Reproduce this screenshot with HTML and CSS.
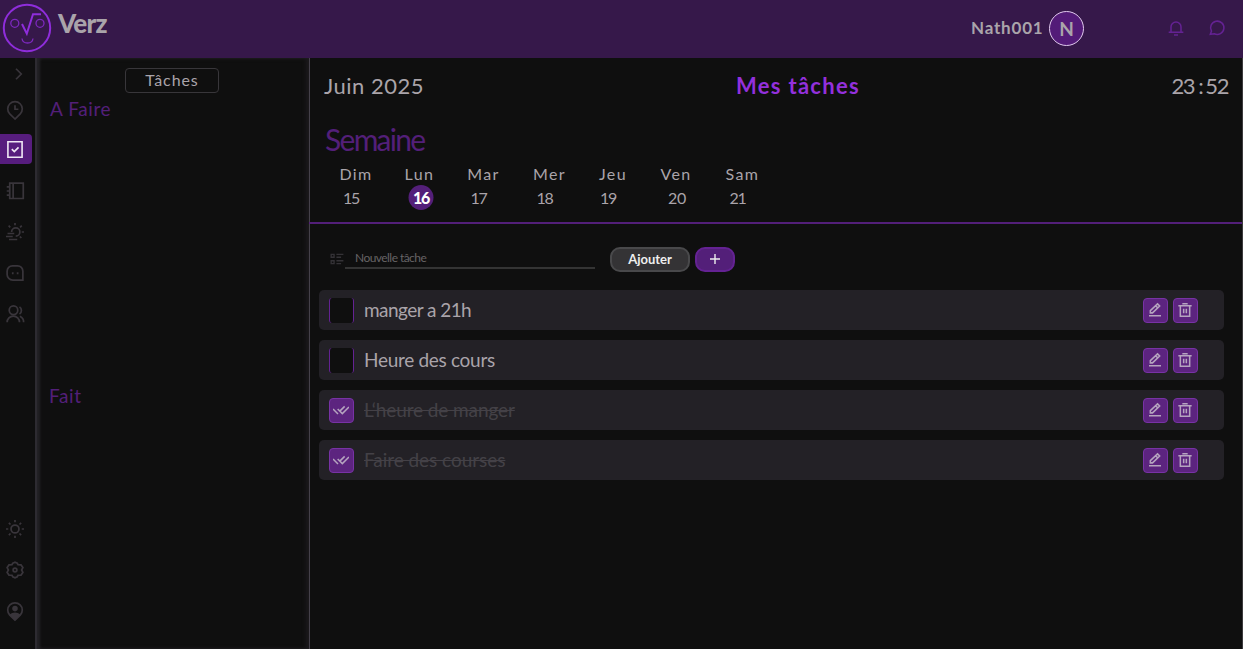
FILE: index.html
```html
<!DOCTYPE html>
<html lang="fr">
<head>
<meta charset="utf-8">
<title>Verz</title>
<link rel="stylesheet" href="styles.css">
</head>
<body>
<svg class="defs" aria-hidden="true">
  <symbol id="edit" viewBox="0 0 24 24"><path d="M3 20.5H21M5 16.3V13L15.8 2.8L19 6L8.3 16.3ZM13 5.7L16.3 9"/></symbol>
  <symbol id="trash" viewBox="0 0 24 24"><path d="M2 5.5H22M5 5.5V21.5H19V5.5M8 2.5H16M10 10V17M14 10V17"/></symbol>
  <symbol id="checks" viewBox="0 0 24 24"><path d="M0 10.5L7.5 18M7 10.5L14 17.5L24 7.5M11 13L17.5 6.5"/></symbol>
</svg>
<header class="topbar">
  <svg class="logo" viewBox="0 0 50 50"><circle cx="25" cy="25" r="23.2" stroke-width="2"/><g stroke-width="1.3" opacity=".8"><circle cx="12.8" cy="20.3" r="4"/><circle cx="38" cy="20.3" r="4"/><path d="M20 35.5Q20.5 40 25.5 40T31 35.5"/></g><path stroke-width="2" d="M20 21L24.8 30.7L31 11.3H39"/></svg>
  <div class="brand">Verz</div>
  <div class="user">Nath001</div>
  <div class="avatar">N</div>
  <div class="alerts">
    <svg class="icon" viewBox="0 0 24 24"><path d="M4.5 18V10.5A7.5 7.5 0 0 1 19.5 10.5V18M1 18.5H23M9 22.5H15"/></svg>
    <svg class="icon" viewBox="0 0 24 24"><path d="M2 21.5L3.7 16.7A10 10 0 1 1 8 20.7Z"/></svg>
  </div>
</header>
<div class="layout">
  <nav class="rail">
    <svg class="icon chevron" viewBox="0 0 24 24"><path d="M8 5L15 12L8 19"/></svg>
    <svg class="icon" viewBox="0 0 24 24"><path d="M12 24L5 17.3A9.7 9.7 0 1 1 19 17.3ZM12 5.5V11H16.5"/></svg>
    <div class="active"><svg class="icon" viewBox="0 0 24 24"><path d="M2 1H22V23H2ZM7.5 11.5L11 15L17 9"/></svg></div>
    <svg class="icon" viewBox="0 0 24 24"><path d="M5 1.5H23V22H5ZM9.5 1.5V22M1 6.5H5M1 12H5M1 17.5H5"/></svg>
    <svg class="icon" viewBox="0 0 24 24"><path d="M7.5 12A5.5 5.5 0 1 1 13 17.5M2 14H11M0 18H9M4 22H15M12 0V3M3.5 3.5L5.7 5.7M21 3.5L18.8 5.7M21 12H24M18.5 18L20.5 20"/></svg>
    <svg class="icon" viewBox="0 0 24 24"><path d="M22.5 21.5H9A7.5 7.5 0 0 1 1.5 14V9.5A7 7 0 0 1 8.5 2.5H15.5A7 7 0 0 1 22.5 9.5ZM9 11V13.5M15.5 11V13.5"/></svg>
    <svg class="icon" viewBox="0 0 24 24"><circle cx="10" cy="7" r="5.7"/><path d="M1.5 23A8.2 8.2 0 0 1 18 23M18 2.5A5.7 5.7 0 0 1 18 12M18.5 15A8.5 8.5 0 0 1 23.5 23"/></svg>
    <svg class="icon rail-bottom" viewBox="0 0 24 24"><circle cx="12" cy="12" r="5.3"/><path d="M12 0V3M12 21V24M0 12H3M21 12H24M3.8 3.8L6 6M18 18L20.2 20.2M18 6L20.2 3.8M3.8 20.2L6 18"/></svg>
    <svg class="icon" viewBox="0 0 24 24"><path d="M9 3L12 1.5L15 3L16 5L20 5.2L22.5 8.7L20.8 12L22.5 15.3L20 18.8L16 19L15 21L12 22.5L9 21L8 19L4 18.8L1.5 15.3L3.2 12L1.5 8.7L4 5.2L8 5Z"/><circle cx="12" cy="12" r="2.5"/></svg>
    <svg class="icon pin" viewBox="0 0 24 24"><path d="M12 24L5 17.5A9.7 9.7 0 1 1 19 17.5Z"/><circle class="solid" cx="12" cy="8.8" r="3.7"/><path class="solid" d="M4.5 16.8Q12 11 19.5 16.8L12 25Z"/></svg>
  </nav>
  <aside class="panel">
    <div class="panel-title"><span>Tâches</span></div>
    <div class="group todo"><span>A Faire</span></div>
    <div class="group done"><span>Fait</span></div>
  </aside>
  <main class="main">
    <div class="heading"><span class="month">Juin 2025</span><span class="title">Mes tâches</span><span class="clock">23<span class="colon">:</span>52</span></div>
    <h2 class="week-title"><span>Semaine</span></h2>
    <div class="week">
      <div class="day"><span>Dim</span><b>15</b></div>
      <div class="day today"><span>Lun</span><b>16</b></div>
      <div class="day"><span>Mar</span><b>17</b></div>
      <div class="day"><span>Mer</span><b>18</b></div>
      <div class="day"><span>Jeu</span><b>19</b></div>
      <div class="day late"><span>Ven</span><b>20</b></div>
      <div class="day"><span>Sam</span><b>21</b></div>
    </div>
    <div class="form">
      <svg class="icon list" viewBox="0 0 24 24"><path d="M2 4H7V9H2ZM2 15H7V20H2ZM11 4H23M11 9H19M11 15H23M11 20H19"/></svg>
      <div class="field"><span>Nouvelle tâche</span></div>
      <button class="add"><span>Ajouter</span></button>
      <button class="plus"><svg class="icon" viewBox="0 0 12 12"><path d="M6 1V11M1 6H11"/></svg></button>
    </div>
    <div class="tasks">
      <div class="task"><i class="check"></i><span class="label t1">manger a 21h</span><i class="btn"><svg class="icon"><use href="#edit"/></svg></i><i class="btn"><svg class="icon"><use href="#trash"/></svg></i></div>
      <div class="task"><i class="check"></i><span class="label t2">Heure des cours</span><i class="btn"><svg class="icon"><use href="#edit"/></svg></i><i class="btn"><svg class="icon"><use href="#trash"/></svg></i></div>
      <div class="task finished"><i class="btn"><svg class="icon"><use href="#checks"/></svg></i><span class="label t3">L‘heure de manger</span><i class="btn"><svg class="icon"><use href="#edit"/></svg></i><i class="btn"><svg class="icon"><use href="#trash"/></svg></i></div>
      <div class="task finished"><i class="btn"><svg class="icon"><use href="#checks"/></svg></i><span class="label t4">Faire des courses</span><i class="btn"><svg class="icon"><use href="#edit"/></svg></i><i class="btn"><svg class="icon"><use href="#trash"/></svg></i></div>
    </div>
  </main>
</div>
</body>
</html>
```
FILE: styles.css
```css
* { box-sizing: border-box; }
body { margin: 0; height: 649px; overflow: hidden; background: #0f0f0f; color: #aaa4aa; font-family: Lato, sans-serif; }
.defs { display: none; }
svg { display: block; flex: none; overflow: visible; }
.icon { width: 18px; height: 18px; fill: none; stroke: currentColor; stroke-width: 2.3; }
.topbar { height: 58px; background: #36184a; display: flex; padding-left: 2px; }
.logo { width: 50px; height: 50px; margin-top: 3px; fill: none; stroke: #8f2ddb; }
.brand { margin: 7px 0 0 6px; width: 913px; font-weight: 900; font-size: 26px; line-height: 32px; letter-spacing: -.8px; }
.user { width: 78px; margin-top: 18px; font-weight: 700; font-size: 17px; line-height: 20px; letter-spacing: .8px; white-space: nowrap; }
.avatar { width: 35px; height: 35px; margin-top: 11px; border: 1px solid #e0c9ed; border-radius: 50%; background: #531b78; font-size: 19px; font-weight: 700; line-height: 33px; text-align: center; }
.alerts { display: flex; gap: 25px; margin: 20px 0 0 84px; color: #642293; }
.alerts .icon { width: 16px; height: 16px; }
.layout { display: flex; height: 591px; border-right: 1px solid #3b3a3d; }
.rail { width: 35px; display: flex; flex-direction: column; gap: 23px; padding: 7px 0 0 6px; color: #39353b; }
.rail .chevron { margin: 0 0 -5px 4px; }
.active { width: 32px; height: 30px; margin: -8px 0 -5px -6px; padding: 7px 0 0 6px; border-radius: 0 4px 4px 0; background: #571d7e; color: #eee6f3; }
.active .icon { height: 17px; }
.rail-bottom { margin-top: 174px; }
.solid { fill: currentColor; stroke: none; }
.panel { width: 275px; border-left: 2px solid #2d2b31; border-right: 1px solid #45414a; box-shadow: inset 3px 0 3px #242327, inset -3px 0 4px #1c1a1d; padding-top: 10px; }
.panel-title { width: 94px; height: 25px; margin-left: 88px; border: 1px solid #38363a; border-radius: 4px; text-align: center; font-size: 16px; line-height: 22px; letter-spacing: .9px; }
.group { color: #531f79; font-size: 19px; line-height: 26px; margin-left: 13px; letter-spacing: .6px; }
.todo { margin-top: 3px; height: 287px; }
.done { margin-left: 12px; }
.main { flex: 1; min-width: 0; }
.heading { height: 50px; padding: 12px 14px 0 14px; display: grid; grid-template-columns: 412px 1fr auto; font-size: 22px; line-height: 32px; }
.month { letter-spacing: .5px; }
.title { color: #9330dc; font-weight: 700; letter-spacing: 1.3px; }
.clock { letter-spacing: -1.4px; }
.colon { margin: 0 3px 0 4px; }
.week-title { margin: 13px 0 0 15px; color: #531f79; font-weight: 400; font-size: 30px; line-height: 36px; letter-spacing: -1.7px; }
.week { height: 67px; padding: 7px 0 0 14px; display: grid; grid-template-columns: 66px 61px 67px 65px 62px 64px 69px; border-bottom: 2px solid #531f79; margin-left: -1px; }
.day { text-align: center; font-size: 16px; line-height: 20px; letter-spacing: 1.4px; }
.day span, .day b { display: block; }
.day b { width: 25px; height: 25px; margin: 1px auto 0; transform: translateX(-5px); border-radius: 50%; font-weight: 400; font-size: 16px; line-height: 25px; letter-spacing: -1.4px; }
.day.late b { transform: translateX(1px); letter-spacing: -.3px; }
.day.today b { background: #531f79; color: #fff; font-weight: 900; transform: translateX(1.5px); }
.form { display: flex; padding: 23px 0 0 20px; height: 66px; }
.list { width: 14px; height: 14px; margin-top: 5px; color: #343236; }
.field { width: 250px; height: 22px; margin-left: 1px; padding-left: 10px; border-bottom: 2px solid #343434; color: #666365; font-size: 12px; line-height: 22px; letter-spacing: -.55px; }
button { height: 25px; padding: 0; border: 2px solid #49494b; border-radius: 10px; background: #343335; color: #eee; font: 700 13px/18px Lato, sans-serif; }
.add span { display: block; margin-top: -2px; }
.add { width: 80px; margin-left: 15px; }
.plus { width: 40px; margin-left: 5px; border-color: #642293; background: #531f79; }
.plus .icon { width: 12px; height: 12px; margin: -1px auto 0; stroke-width: 1.4; }
.tasks { display: grid; gap: 10px; margin-left: 9px; width: 905px; }
.task { display: flex; height: 40px; padding: 8px 26px 0 10px; gap: 5px; border-radius: 5px; background: #232126; }
.label { margin-left: 5px; flex: 1; font-size: 19px; line-height: 23px; white-space: nowrap; }
.check { width: 25px; height: 25px; border: solid #642293; border-width: 0 1px; border-radius: 3px; background: #0f0f0f; }
.btn { width: 25px; height: 25px; padding: 3px; border: 1px solid #7832a5; border-radius: 4px; background: #5c247f; color: #b5a4bf; }
.btn .icon { width: 16px; height: 16px; }
.finished .label { color: #444147; text-decoration: line-through; text-decoration-thickness: 1px; }
.label.t1 { letter-spacing: -.55px; }
.label.t2 { letter-spacing: -.3px; }
.label.t3 { letter-spacing: -.1px; }
.label.t4 { letter-spacing: -.05px; }
```
